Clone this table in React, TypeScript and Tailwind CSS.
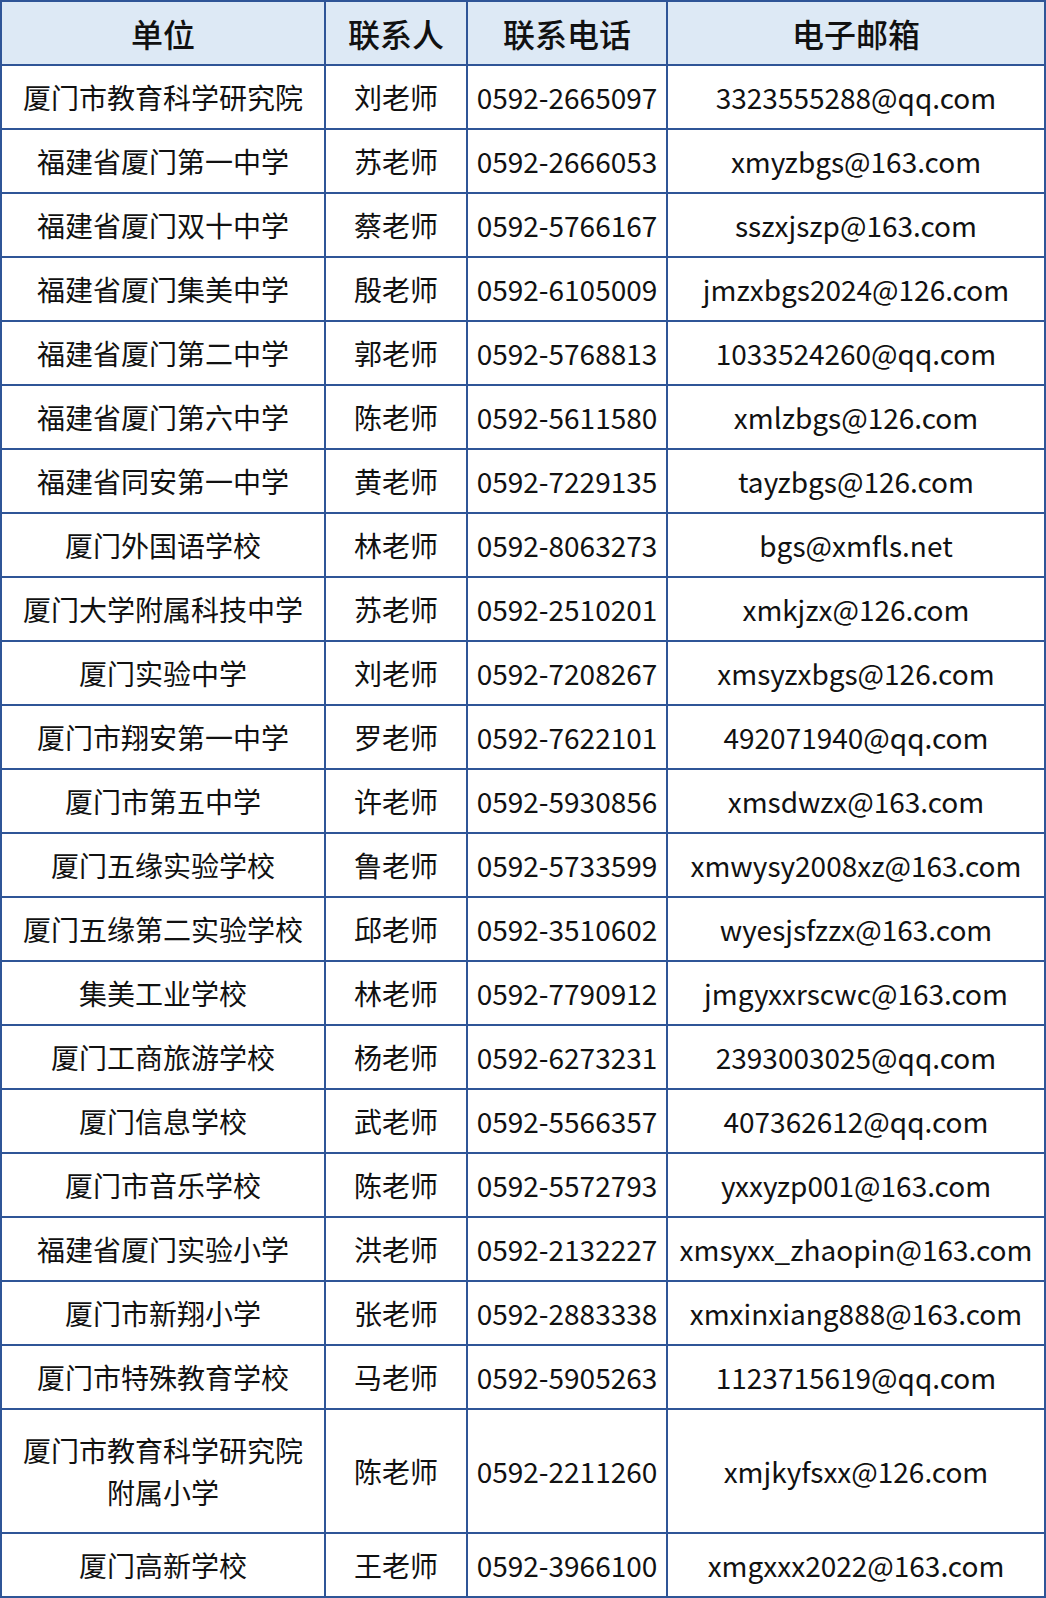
const rows: [string, string, string, string][] = [
  ['厦门市教育科学研究院', '刘老师', '0592-2665097', '3323555288@qq.com'],
  ['福建省厦门第一中学', '苏老师', '0592-2666053', 'xmyzbgs@163.com'],
  ['福建省厦门双十中学', '蔡老师', '0592-5766167', 'sszxjszp@163.com'],
  ['福建省厦门集美中学', '殷老师', '0592-6105009', 'jmzxbgs2024@126.com'],
  ['福建省厦门第二中学', '郭老师', '0592-5768813', '1033524260@qq.com'],
  ['福建省厦门第六中学', '陈老师', '0592-5611580', 'xmlzbgs@126.com'],
  ['福建省同安第一中学', '黄老师', '0592-7229135', 'tayzbgs@126.com'],
  ['厦门外国语学校', '林老师', '0592-8063273', 'bgs@xmfls.net'],
  ['厦门大学附属科技中学', '苏老师', '0592-2510201', 'xmkjzx@126.com'],
  ['厦门实验中学', '刘老师', '0592-7208267', 'xmsyzxbgs@126.com'],
  ['厦门市翔安第一中学', '罗老师', '0592-7622101', '492071940@qq.com'],
  ['厦门市第五中学', '许老师', '0592-5930856', 'xmsdwzx@163.com'],
  ['厦门五缘实验学校', '鲁老师', '0592-5733599', 'xmwysy2008xz@163.com'],
  ['厦门五缘第二实验学校', '邱老师', '0592-3510602', 'wyesjsfzzx@163.com'],
  ['集美工业学校', '林老师', '0592-7790912', 'jmgyxxrscwc@163.com'],
  ['厦门工商旅游学校', '杨老师', '0592-6273231', '2393003025@qq.com'],
  ['厦门信息学校', '武老师', '0592-5566357', '407362612@qq.com'],
  ['厦门市音乐学校', '陈老师', '0592-5572793', 'yxxyzp001@163.com'],
  ['福建省厦门实验小学', '洪老师', '0592-2132227', 'xmsyxx_zhaopin@163.com'],
  ['厦门市新翔小学', '张老师', '0592-2883338', 'xmxinxiang888@163.com'],
  ['厦门市特殊教育学校', '马老师', '0592-5905263', '1123715619@qq.com'],
  ['厦门市教育科学研究院\n附属小学', '陈老师', '0592-2211260', 'xmjkyfsxx@126.com'],
  ['厦门高新学校', '王老师', '0592-3966100', 'xmgxxx2022@163.com'],
]

const headers = ['单位', '联系人', '联系电话', '电子邮箱']

export default function App() {
  return (
    <div
      className="w-[1046px] bg-white"
      style={{ fontFamily: '"Noto Sans CJK SC", "Noto Sans", sans-serif' }}
    >
      <div className="grid grid-cols-[322px_140px_198px_376px] gap-[2px] bg-[#2f5597] p-[2px] text-[28px] text-[#111]">
        {headers.map((h) => (
          <div
            key={h}
            className="flex h-[62px] items-center justify-center bg-[#dde9f5] text-[32px] font-medium"
          >
            {h}
          </div>
        ))}
        {rows.map((row, i) =>
          row.map((cell, j) => {
            const tall = row[0].includes('\n')
            return (
              <div
                key={`${i}-${j}`}
                className={`flex items-center justify-center bg-white text-center leading-[42px] whitespace-pre-line ${
                  tall ? 'h-[122px]' : 'h-[62px]'
                }`}
              >
                {cell}
              </div>
            )
          })
        )}
      </div>
    </div>
  )
}
